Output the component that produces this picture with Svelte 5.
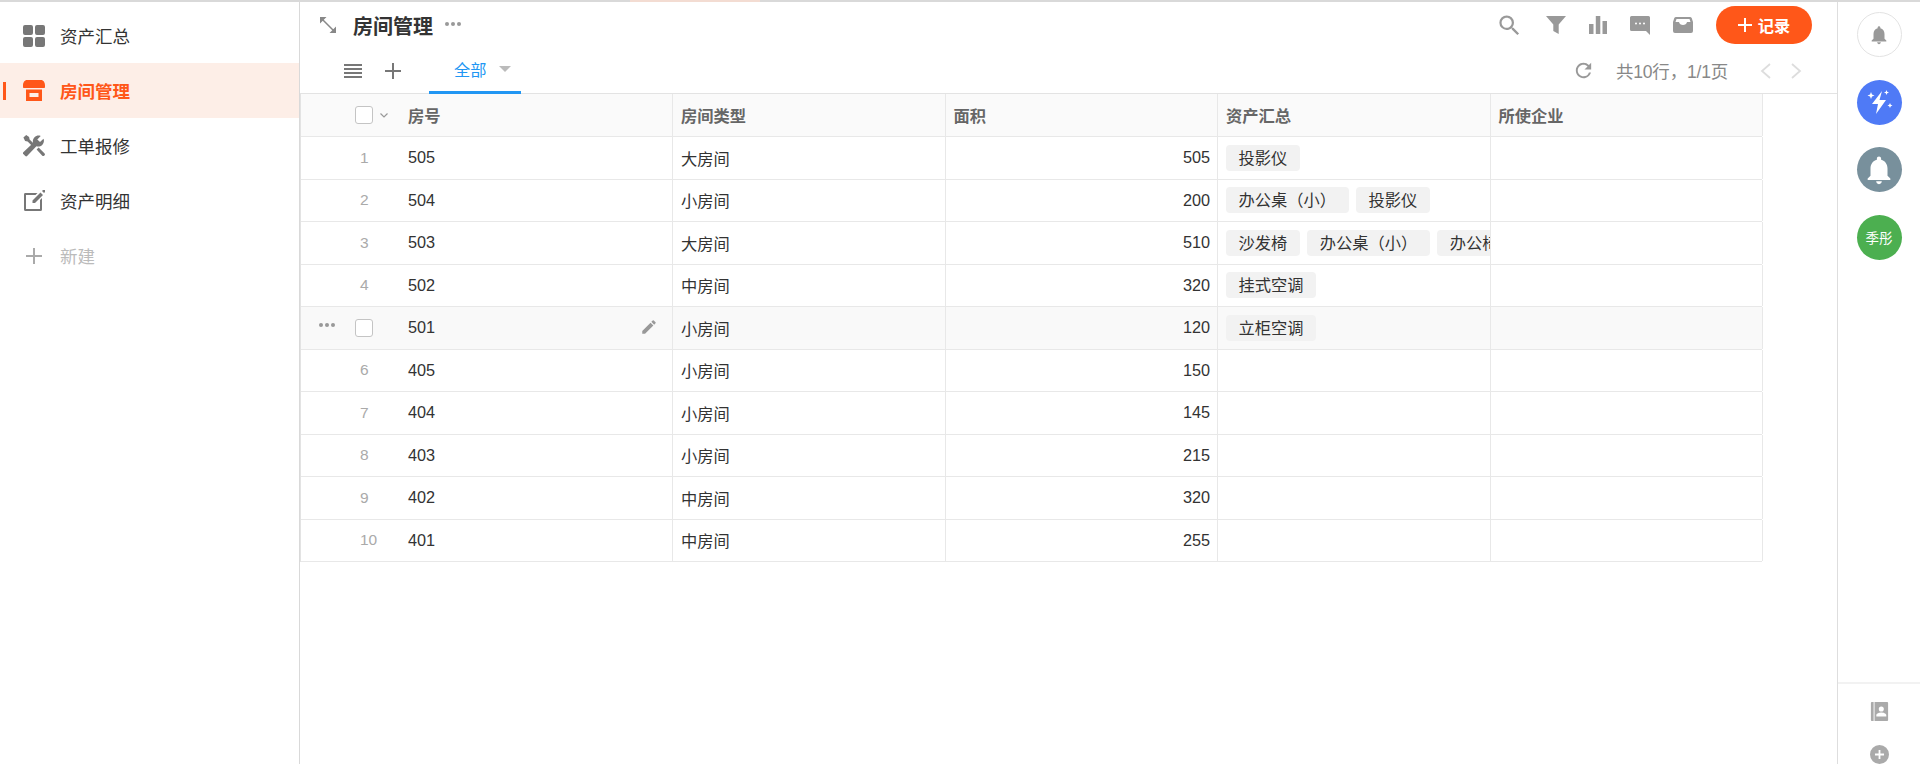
<script lang="ts">
	const sideItems = [
		{ label: '资产汇总', icon: 'grid' },
		{ label: '房间管理', icon: 'store', active: true },
		{ label: '工单报修', icon: 'tools' },
		{ label: '资产明细', icon: 'note' },
	];

	const columns = ['房间类型', '面积', '资产汇总', '所使企业'];

	const rows = [
		{ room: '505', type: '大房间', area: 505, assets: ['投影仪'] },
		{ room: '504', type: '小房间', area: 200, assets: ['办公桌（小）', '投影仪'] },
		{ room: '503', type: '大房间', area: 510, assets: ['沙发椅', '办公桌（小）', '办公椅'] },
		{ room: '502', type: '中房间', area: 320, assets: ['挂式空调'] },
		{ room: '501', type: '小房间', area: 120, assets: ['立柜空调'], hover: true },
		{ room: '405', type: '小房间', area: 150, assets: [] },
		{ room: '404', type: '小房间', area: 145, assets: [] },
		{ room: '403', type: '小房间', area: 215, assets: [] },
		{ room: '402', type: '中房间', area: 320, assets: [] },
		{ room: '401', type: '中房间', area: 255, assets: [] },
	];
</script>

<div class="page">
	<div class="topline"><span class="glow"></span></div>
	<div class="layout">
		<aside class="sidebar">
			{#each sideItems as item}
				<div class="side-item" class:active={item.active}>
					{#if item.active}<span class="marker"></span>{/if}
					<svg class="side-icon" viewBox="0 0 22 22" width="22" height="22">
						{#if item.icon === 'grid'}
							<path fill="#777" d="M2 0h6a2 2 0 0 1 2 2v6a2 2 0 0 1-2 2H2a2 2 0 0 1-2-2V2a2 2 0 0 1 2-2zM14 0h6a2 2 0 0 1 2 2v6a2 2 0 0 1-2 2h-6a2 2 0 0 1-2-2V2a2 2 0 0 1 2-2zM2 12h6a2 2 0 0 1 2 2v6a2 2 0 0 1-2 2H2a2 2 0 0 1-2-2v-6a2 2 0 0 1 2-2zM14 12h6a2 2 0 0 1 2 2v6a2 2 0 0 1-2 2h-6a2 2 0 0 1-2-2v-6a2 2 0 0 1 2-2z"/>
						{:else if item.icon === 'store'}
							<path fill="#ff5719" d="M4 0h14c2.4 0 4 2.4 4 5.5V7c0 .6-.4 1-1 1H1C.4 8 0 7.600 0 7V5.500C0 2.400 1.600 0 4 0zM3 9.500h3.500V21H3zM15.500 9.500H19V21h-3.500zM6.500 9.500h9V13h-9zM6.500 17h9v4h-9z" />
							<path fill="#ff5719" d="M9 13.500h4V17H9z" opacity="0"/>
						{:else if item.icon === 'tools'}
							<path fill="#777" d="M21.700 17.300 11.900 8c.6-2 .2-4.200-1.400-5.800C8.800.6 6.400.1 4.300 1l3.400 3.400-2.700 2.700L1.500 3.700C.6 5.800 1.100 8.200 2.800 9.900c1.600 1.600 3.800 2 5.800 1.400l9.300 9.800c.5.500 1.300.5 1.800 0l2-2c.5-.5.5-1.300 0-1.800z" transform="translate(22 0) scale(-1 1)"/>
							<path fill="#777" d="M3.200 0 .4 2.600l1.700 3.300 2.500.5 5.600 5.600 2-2-5.600-5.600-.5-2.500zM13.600 14.400l5.700 6.300c.5.500 1.300.5 1.800 0l.5-.5c.5-.5.5-1.300 0-1.800l-6-6z"/>
						{:else}
							<path fill="#777" d="M2 3h12.500l-2 2H3v14h14V10l2-2v11.500a1.500 1.500 0 0 1-1.500 1.500h-15A1.500 1.500 0 0 1 1 19.500v-15A1.500 1.500 0 0 1 2 3z"/>
							<path fill="#777" d="M17.500 2.500 20 5l-8 8H9.500v-2.500zM20 0l2 0v2l-1 1-2-2z"/>
						{/if}
					</svg>
					<span>{item.label}</span>
				</div>
			{/each}
			<div class="side-item add">
				<svg class="side-icon" viewBox="0 0 22 22" width="22" height="22">
					<path fill="#aaa" d="M10 4h2v7h7v2h-7v7h-2v-7H3v-2h7z" transform="translate(0 -1)"/>
				</svg>
				<span>新建</span>
			</div>
		</aside>

		<main class="main">
			<div class="title-row">
				<svg class="expand" viewBox="0 0 16 16" width="16" height="16">
					<path fill="none" stroke="#888" stroke-width="1.500" d="M1.500 1.500l13 13"/>
					<path fill="#888" d="M0 0h6.500L0 6.500zM16 16H9.500L16 9.500z"/>
				</svg>
				<h1>房间管理</h1>
				<span class="dots title-dots"><i></i><i></i><i></i></span>
				<div class="tools">
					<svg viewBox="0 0 24 24" width="27" height="27"><path fill="#999" d="M15.500 14h-.79l-.28-.27A6.471 6.471 0 0 0 16 9.500 6.500 6.500 0 1 0 9.500 16c1.610 0 3.090-.59 4.230-1.570l.27.28v.79l5 4.990L20.490 19l-4.990-5zm-6 0C7.010 14 5 11.990 5 9.500S7.010 5 9.500 5 14 7.010 14 9.500 11.990 14 9.500 14z"/></svg>
					<svg viewBox="0 0 20 18" width="20" height="18"><path fill="#999" d="M0 0h20l-7.300 8.500V18L7.300 15V8.500z"/></svg>
					<svg viewBox="0 0 18 18" width="18" height="18"><path fill="#999" d="M0 8h4.500v10H0zM6.800 0h4.500v18H6.800zM13.500 5H18v13h-4.500z"/></svg>
					<svg viewBox="0 0 20 19" width="20" height="19"><path fill="#999" fill-rule="evenodd" d="M1.500 0h17A1.500 1.500 0 0 1 20 1.500V19l-4-4H1.500A1.500 1.500 0 0 1 0 13.500v-12A1.500 1.500 0 0 1 1.500 0zM6 6.500a1 1 0 1 0 0 2 1 1 0 0 0 0-2zm4 0a1 1 0 1 0 0 2 1 1 0 0 0 0-2zm4 0a1 1 0 1 0 0 2 1 1 0 0 0 0-2z"/></svg>
					<svg viewBox="0 0 20 16" width="20" height="16"><path fill="#999" fill-rule="evenodd" d="M3 0h14a2 2 0 0 1 1.700 1L20 5v9a2 2 0 0 1-2 2H2a2 2 0 0 1-2-2V5l1.300-4A2 2 0 0 1 3 0zm.500 2L2.500 5H6c.3 1.800 2 3 4 3s3.700-1.200 4-3h3.500l-1-3z"/></svg>
					<button class="add-record">
						<svg viewBox="0 0 14 14" width="14" height="14"><path fill="#fff" d="M6 0h2v6h6v2H8v6H6V8H0V6h6z"/></svg>
						记录
					</button>
				</div>
			</div>

			<div class="tab-row">
				<svg class="menu" viewBox="0 0 18 14" width="18" height="14"><path fill="#777" d="M0 0h18v2H0zM0 4h18v2H0zM0 8h18v2H0zM0 12h18v2H0z"/></svg>
				<svg class="plus" viewBox="0 0 16 16" width="16" height="16"><path fill="#777" d="M7 0h2v7h7v2H9v7H7V9H0V7h7z"/></svg>
				<div class="tab">
					全部
					<span class="caret"></span>
				</div>
				<div class="pager">
					<svg viewBox="0 0 24 24" width="23" height="23"><path fill="#999" d="M17.650 6.350A7.958 7.958 0 0 0 12 4c-4.420 0-7.990 3.580-7.990 8s3.570 8 7.990 8c3.730 0 6.840-2.550 7.730-6h-2.080A5.990 5.990 0 0 1 12 18c-3.310 0-6-2.690-6-6s2.690-6 6-6c1.660 0 3.140.69 4.220 1.780L13 11h7V4l-2.350 2.350z"/></svg>
					<span class="count">共10行，1/1页</span>
					<svg class="chev" viewBox="0 0 11 16" width="11" height="16"><path fill="none" stroke="#ddd" stroke-width="1.800" d="M10 1 2 8l8 7"/></svg>
					<svg class="chev" viewBox="0 0 11 16" width="11" height="16"><path fill="none" stroke="#ddd" stroke-width="1.800" d="M1 1l8 7-8 7"/></svg>
				</div>
			</div>

			<div class="table">
				<div class="row head">
					<div class="cell first">
						<span class="index"></span>
						<span class="check"></span>
						<svg class="head-chev" viewBox="0 0 8 5" width="8" height="5"><path fill="none" stroke="#999" stroke-width="1.200" d="M.5.500 4 4 7.500.500"/></svg>
						<span class="head-room">房号</span>
					</div>
					{#each columns as col}
						<div class="cell">{col}</div>
					{/each}
				</div>
				{#each rows as row, i}
					<div class="row" class:hover={row.hover}>
						<div class="cell first">
							{#if row.hover}
								<span class="dots row-dots"><i></i><i></i><i></i></span>
								<span class="check"></span>
								<span class="room hover-room">{row.room}</span>
								<svg class="pencil" viewBox="0 0 24 24" width="18" height="18"><path fill="#999" d="M3 17.250V21h3.750L17.810 9.940l-3.750-3.750L3 17.250zM20.710 7.040c.39-.39.39-1.020 0-1.410l-2.340-2.340a.996.996 0 0 0-1.410 0l-1.830 1.830 3.750 3.750 1.830-1.830z"/></svg>
							{:else}
								<span class="index">{i + 1}</span>
								<span class="room">{row.room}</span>
							{/if}
						</div>
						<div class="cell">{row.type}</div>
						<div class="cell num">{row.area}</div>
						<div class="cell tags">
							{#each row.assets as tag}
								<span class="tag">{tag}</span>
							{/each}
						</div>
						<div class="cell"></div>
					</div>
				{/each}
			</div>
		</main>

		<aside class="rail">
			<div class="circle outline">
				<svg viewBox="0 0 24 24" width="22" height="22"><path fill="#999" d="M12 22c1.100 0 2-.9 2-2h-4c0 1.100.89 2 2 2zm6-6v-5c0-3.070-1.640-5.640-4.500-6.320V4c0-.83-.67-1.500-1.500-1.500s-1.500.67-1.500 1.500v.68C7.630 5.360 6 7.920 6 11v5l-2 2v1h16v-1l-2-2z"/></svg>
			</div>
			<div class="circle blue">
				<svg viewBox="0 0 30 30" width="30" height="30">
					<path fill="#fff" d="M18 4 8 17h6l-2 10 10-14h-6.500z"/>
					<path fill="#fff" d="M7 5l1 2.500L10.500 8.500 8 9.500 7 12l-1-2.500L3.500 8.500 6 7.500zM22.500 3l.7 1.800L25 5.500l-1.800.7-.7 1.800-.7-1.800-1.800-.7 1.800-.7zM26 16l.8 1.700 1.700.8-1.700.8-.8 1.700-.8-1.700-1.700-.8 1.700-.8z"/>
				</svg>
			</div>
			<div class="circle slate">
				<svg viewBox="0 0 24 24" width="34" height="34"><path fill="#fff" d="M12 22c1.100 0 2-.9 2-2h-4c0 1.100.89 2 2 2zm6-6v-5c0-3.070-1.640-5.640-4.500-6.320V4c0-.83-.67-1.500-1.500-1.500s-1.500.67-1.500 1.500v.68C7.630 5.360 6 7.920 6 11v5l-2 2v1h16v-1l-2-2z"/></svg>
			</div>
			<div class="circle green">季彤</div>
			<div class="rail-foot">
				<svg viewBox="0 0 19 21" width="19" height="21">
					<path fill="#aaa" fill-rule="evenodd" d="M0 1a1 1 0 0 1 1-1h2v21H1a1 1 0 0 1-1-1zM4 0h14a1 1 0 0 1 1 1v19a1 1 0 0 1-1 1H4zm7.500 5a2.800 2.800 0 1 0 0 5.600 2.800 2.800 0 0 0 0-5.600zM6 16h11v-1.500c0-1.800-3.600-2.800-5.500-2.800S6 12.700 6 14.500z"/>
				</svg>
				<svg viewBox="0 0 21 21" width="21" height="21">
					<path fill="#aaa" fill-rule="evenodd" d="M10.500 0a10.500 10.500 0 1 1 0 21 10.500 10.500 0 0 1 0-21zM9.500 5.500v4h-4v2h4v4h2v-4h4v-2h-4v-4z"/>
				</svg>
			</div>
		</aside>
	</div>
</div>

<style>
	:global(body) {
		margin: 0;
		background: #fff;
		overflow: hidden;
	}

	.page {
		height: 764px;
		overflow: hidden;
		display: flex;
		flex-direction: column;
		font-family: "Liberation Sans", "Noto Sans CJK SC", sans-serif;
		font-size: 16.25px;
		color: #333;
	}

	.topline {
		height: 2px;
		flex-shrink: 0;
		background: #d9d9d9;
	}

	.glow {
		display: block;
		width: 130px;
		height: 2px;
		margin-left: 630px;
		background: #f3dcd2;
	}

	.layout {
		flex: 1;
		display: flex;
		min-height: 0;
	}

	.sidebar {
		width: 300px;
		flex-shrink: 0;
		box-sizing: border-box;
		border-right: 1px solid #d9d9d9;
		padding-top: 6px;
	}

	.side-item {
		position: relative;
		height: 55px;
		display: flex;
		align-items: center;
		gap: 15px;
		padding-left: 23px;
		font-size: 17.5px;
		color: #333;
	}

	.side-item.active {
		background: #fdeee7;
		color: #ff5719;
		font-weight: 700;
	}

	.side-item.add {
		color: #bbb;
	}

	.marker {
		position: absolute;
		left: 3px;
		top: 19px;
		width: 3px;
		height: 18px;
		background: #ff5719;
	}

	.side-icon {
		flex-shrink: 0;
	}

	.main {
		flex: 1;
		min-width: 0;
		display: flex;
		flex-direction: column;
	}

	.title-row {
		height: 46px;
		display: flex;
		align-items: center;
		padding-left: 20px;
	}

	.expand {
		margin-right: 17px;
	}

	h1 {
		margin: 0 0 0 0;
		font-size: 20px;
		font-weight: 700;
		color: #333;
	}

	.dots {
		display: inline-flex;
		gap: 2px;
	}

	.dots i {
		width: 4px;
		height: 4px;
		border-radius: 50%;
		background: #999;
	}

	.title-dots {
		margin-left: 12px;
		margin-bottom: 3px;
	}

	.tools {
		margin-left: auto;
		display: flex;
		align-items: center;
		gap: 23px;
		padding-right: 25px;
	}

	.add-record {
		width: 96px;
		height: 38px;
		margin-left: 0;
		border: none;
		border-radius: 19px;
		background: #ff5719;
		color: #fff;
		font: 700 16.25px "Liberation Sans", "Noto Sans CJK SC", sans-serif;
		display: flex;
		align-items: center;
		justify-content: center;
		gap: 6px;
		padding: 0;
	}

	.tab-row {
		height: 46px;
		box-sizing: border-box;
		border-bottom: 1px solid #e3e3e3;
		display: flex;
		align-items: center;
		padding-left: 44px;
	}

	.plus {
		margin-left: 23px;
	}

	.tab {
		margin-left: 28px;
		width: 92px;
		height: 46px;
		box-sizing: border-box;
		border-bottom: 3px solid #2196f3;
		padding-left: 25px;
		display: flex;
		align-items: center;
		gap: 12px;
		font-weight: 400;
		color: #2196f3;
	}

	.caret {
		width: 0;
		height: 0;
		border-left: 6px solid transparent;
		border-right: 6px solid transparent;
		border-top: 6px solid #bbb;
	}

	.pager {
		margin-left: auto;
		display: flex;
		align-items: center;
		padding-right: 35px;
		height: 100%;
		color: #888;
	}

	.count {
		margin: 0 32px 0 21px;
		font-size: 17.5px;
		letter-spacing: -0.2px;
		color: #888;
	}

	.chev + .chev {
		margin-left: 20px;
	}

	.table {
		width: 1461px;
		border-left: 1px solid #e3e3e3;
		flex-shrink: 0;
	}

	.row {
		display: grid;
		grid-template-columns: 372px repeat(4, 272.500px);
		height: 42.500px;
		box-sizing: border-box;
		border-bottom: 1px solid #e8e8e8;
	}

	.row.head {
		height: 43px;
		background: #fafafa;
		font-weight: 700;
		color: #666;
	}

	.row.hover {
		background: #f9f9f9;
	}

	.cell {
		min-width: 0;
		overflow: hidden;
		white-space: nowrap;
		display: flex;
		align-items: center;
		box-sizing: border-box;
		padding-left: 8px;
		border-right: 1px solid #e8e8e8;
	}

	.cell.first {
		position: relative;
		padding-left: 0;
	}

	.index {
		width: 126px;
		margin-right: -19px;
		padding-left: 59px;
		box-sizing: border-box;
		flex-shrink: 0;
		text-align: left;
		color: #aaa;
		font-size: 15.500px;
	}

	.room {
		margin-left: 0;
	}

	.head .index {
		width: 54px;
		margin: 0;
		padding: 0;
	}

	.check {
		width: 18px;
		height: 18px;
		box-sizing: border-box;
		flex-shrink: 0;
		background: #fff;
		border: 1px solid #c4c4c4;
		border-radius: 3px;
	}

	.head-chev {
		margin-left: 7px;
	}

	.head-room {
		margin-left: 20px;
	}

	.row-dots {
		position: absolute;
		left: 18px;
		top: 16px;
	}

	.row.hover .check {
		margin-left: 54px;
	}

	.hover-room {
		margin-left: 35px;
	}

	.pencil {
		position: absolute;
		left: 339px;
		top: 11px;
	}

	.cell.num {
		justify-content: flex-end;
		padding: 0 7px 0 0;
	}

	.cell.tags {
		gap: 7.500px;
	}

	.tag {
		height: 26px;
		line-height: 26px;
		padding: 0 12.500px;
		border-radius: 4px;
		background: #f2f2f2;
		flex-shrink: 0;
	}

	.rail {
		width: 83px;
		flex-shrink: 0;
		box-sizing: border-box;
		border-left: 1px solid #dedede;
		display: flex;
		flex-direction: column;
		align-items: center;
		padding-top: 10px;
		gap: 22.500px;
	}

	.circle {
		width: 45px;
		height: 45px;
		flex-shrink: 0;
		box-sizing: border-box;
		border-radius: 50%;
		display: flex;
		align-items: center;
		justify-content: center;
		color: #fff;
		font-size: 13.500px;
	}

	.outline {
		border: 1px solid #e3e3e3;
	}

	.blue {
		background: #4f7af6;
	}

	.slate {
		background: #78909c;
	}

	.green {
		background: #4caf50;
	}

	.rail-foot {
		margin-top: auto;
		align-self: stretch;
		height: 82px;
		flex-shrink: 0;
		box-sizing: border-box;
		border-top: 2px solid #f2f2f2;
		padding-top: 18px;
		display: flex;
		flex-direction: column;
		align-items: center;
		gap: 24px;
		overflow: hidden;
	}
</style>
